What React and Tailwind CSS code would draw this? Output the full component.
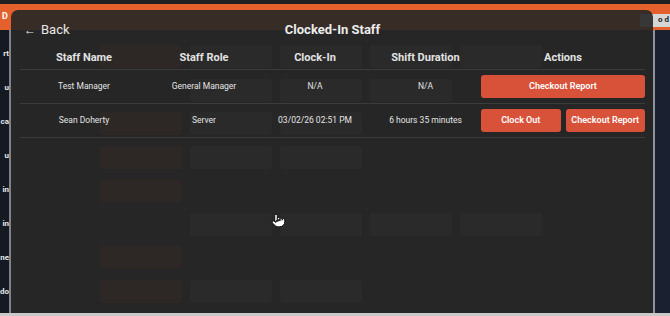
import React from "react";
import { Pointer } from "lucide-react";

// faint page buttons that show through the modal
const bgRows = [
    ["red", "gray", "gray", "gray", "gray"],
    ["", "gray", "gray", "gray", ""],
    ["red", "gray", "gray", "", ""],
    ["red", "gray", "gray", "", ""],
    ["red", "", "", "", ""],
    ["", "gray", "gray", "gray", "gray"],
    ["red", "", "", "", ""],
    ["red", "gray", "gray", "", ""],
];

// only the tail end of the sidebar labels peeks out
const sideLabels = ["rt", "u", "ca", "u", "in", "in", "ne", "do"];

const staff = [
    { name: "Test Manager", role: "General Manager", clockIn: "N/A", duration: "N/A", canClockOut: false },
    { name: "Sean Doherty", role: "Server", clockIn: "03/02/26 02:51 PM", duration: "6 hours 35 minutes", canClockOut: true },
];

const Background = () => (
    <div className="flex flex-1 min-h-0">
        {/* sidebar */}
        <div className="w-[9px] shrink-0 bg-[#151922] flex flex-col pt-[12px] gap-y-[11px]">
            {sideLabels.map((l, i) => (
                <div key={i} className="h-[23px] shrink-0 flex items-center justify-end text-[8px] font-bold text-[#e8e8e8] whitespace-nowrap">
                    {l}
                </div>
            ))}
        </div>
        <div className="w-[2px] shrink-0 bg-[#7d828c]" />

        {/* main grid behind modal */}
        <div className="flex-1 bg-[#262626] pl-[13px] pt-[15px]">
            <div className="grid grid-cols-[68px_82px_82px_82px_82px_82px] gap-x-[8px] gap-y-[10.5px] auto-rows-[23px]">
                {bgRows.map((row, r) => (
                    <React.Fragment key={r}>
                        <div />
                        {row.map((c, i) =>
                            c === "red" ? (
                                <div key={i} className="rounded-[3px] bg-[#6e2c21]" />
                            ) : c === "gray" ? (
                                <div key={i} className="rounded-[3px] bg-[#4e4e4e]" />
                            ) : (
                                <div key={i} />
                            )
                        )}
                    </React.Fragment>
                ))}
            </div>
        </div>

        <div className="w-[2px] shrink-0 bg-[#8e939b]" />
        <div className="w-[15px] shrink-0 bg-[#1b2030]" />
    </div>
);

const App = () => {
    return (
        <div
            className="relative w-[670px] h-[316px] overflow-hidden flex flex-col bg-[#1b2030]"
            style={{ fontFamily: "Roboto, 'Liberation Sans', sans-serif" }}
        >
            {/* top strip + header */}
            <div className="h-[4px] shrink-0 bg-[#202020]" />
            <div className="h-[26px] shrink-0 bg-[#e4612d] flex items-center justify-between pl-[2px]">
                <span className="text-[9px] font-bold text-white">D</span>
                <div className="h-[13px] w-[30px] bg-[#d6d6d6] mt-[6px] flex items-center justify-end pr-[1px] text-[8px] font-bold text-[#222] whitespace-nowrap">
                    o d
                </div>
            </div>

            <Background />

            {/* screen edge */}
            <div className="h-[3px] shrink-0 bg-[#c9c9c9]" />

            {/* Clocked-in staff modal */}
            <div className="absolute left-[11px] top-[10px] w-[642px] h-[303px] rounded-t-[7px] bg-[rgba(38,38,38,0.91)] pt-[11px] pl-[9px] pr-[8px] text-[#e6e6e6]">
                <div className="relative h-[18px] flex items-center justify-center">
                    <button className="absolute left-[4px] flex items-center gap-[5px] text-[13px] text-[#e8e8e8]">
                        <span className="text-[12px]">←</span>
                        <span>Back</span>
                    </button>
                    <h1 className="text-[13px] font-bold text-[#ececec]">Clocked-In Staff</h1>
                </div>

                <div className="mt-[9px] grid grid-cols-[128px_112px_110px_111px_164px] h-[22px] items-center border-b border-[#3b3b3b] text-[11px] font-bold text-[#e2e2e2] text-center">
                    <div>Staff Name</div>
                    <div>Staff Role</div>
                    <div>Clock-In</div>
                    <div>Shift Duration</div>
                    <div>Actions</div>
                </div>

                {staff.map((s) => (
                    <div
                        key={s.name}
                        className="grid grid-cols-[128px_112px_110px_111px_164px] h-[34px] items-center border-b border-[#3b3b3b] text-[8.5px] text-[#e4e4e4] text-center"
                    >
                        <div>{s.name}</div>
                        <div>{s.role}</div>
                        <div>{s.clockIn}</div>
                        <div>{s.duration}</div>
                        <div className="flex gap-[5px]">
                            {s.canClockOut && (
                                <button className="flex-1 h-[23px] rounded-[3px] bg-[#d8523a] text-white text-[9px] font-semibold">
                                    Clock Out
                                </button>
                            )}
                            <button className="flex-1 h-[23px] rounded-[3px] bg-[#d8523a] text-white text-[9px] font-semibold">
                                Checkout Report
                            </button>
                        </div>
                    </div>
                ))}
            </div>

            {/* mouse pointer */}
            <Pointer className="absolute left-[271px] top-[213px]" size={15} fill="#ffffff" color="#111111" strokeWidth={1.6} />
        </div>
    );
};

export default App;
